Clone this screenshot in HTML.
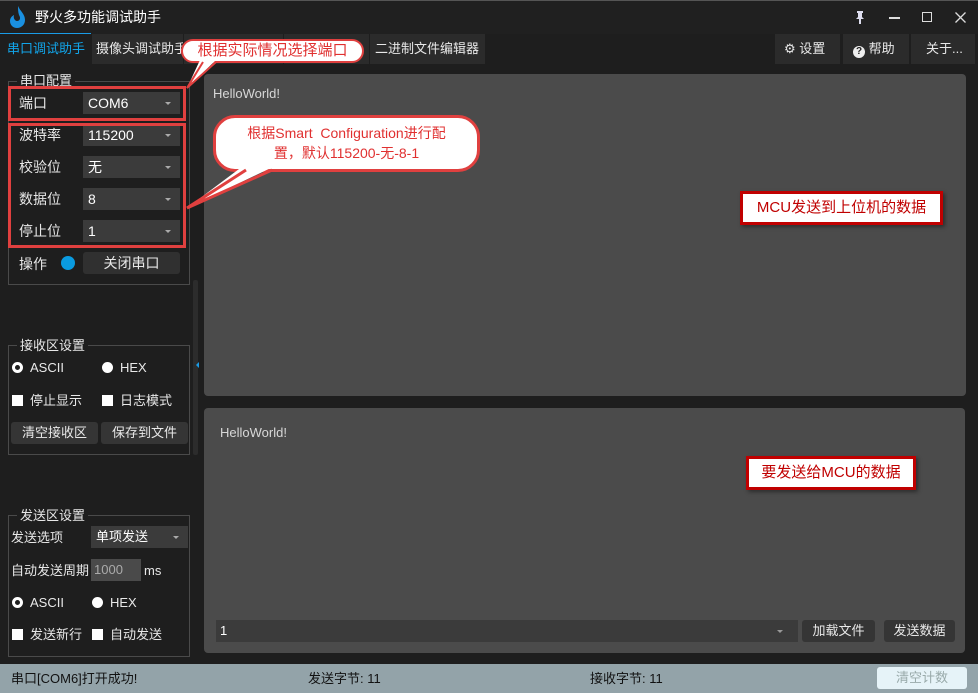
<!DOCTYPE html>
<html><head><meta charset="utf-8"><style>
*{margin:0;padding:0;box-sizing:border-box}
body{width:978px;height:693px;background:#1e1e1e;font-family:"Liberation Sans","Noto Sans CJK SC",sans-serif;font-size:13px;line-height:16px;color:#e8e8e8;position:relative;overflow:hidden}
.a{position:absolute;white-space:nowrap}
.cb{position:absolute;background:#3b3b3b;height:22px;padding-left:5px;line-height:22px;font-size:14px;color:#fff}
.cb:after{content:"";position:absolute;right:9px;top:10px;border:3.5px solid transparent;border-top:3.5px solid #aaa}
.btn{position:absolute;background:#353535;border-radius:3px;text-align:center;color:#e8e8e8}
.tab{position:absolute;top:34px;height:30px;line-height:30px;background:#2b2b2b;color:#e8e8e8;font-size:13px;padding-left:4px;white-space:nowrap;overflow:hidden}
.grp{position:absolute;border:1px solid #4a4a4a}
.gt{position:absolute;background:#1e1e1e;padding:0 3px;font-size:13px}
.rb{position:absolute;width:11px;height:11px;border-radius:50%;background:#fff}
.rb.o{background:#1e1e1e;border:3px solid #fff}
.ck{position:absolute;width:11px;height:11px;background:#fff}
.red{border:3px solid #e0403f}
</style></head><body>
<div class="a" style="left:0;top:0;width:978px;height:34px;background:#202020;border-top:1px solid #555"></div>
<svg class="a" style="left:9px;top:6px" width="18" height="22" viewBox="0 0 18 22"><path d="M9 0C11 5 16 8 16 14C16 19 12 22 8 22C4 22 1 19 1 15C1 12 3 10 5 9C4 12 6 15 8 15C11 15 12 12 10 9C9 6 9 3 9 0Z" fill="#1a90e0"/></svg>
<div class="a" style="left:35px;top:9px;font-size:14px;color:#fff">野火多功能调试助手</div>
<svg class="a" style="left:855px;top:11px" width="10" height="13"><path d="M2 0H8V2H7V6L9 8H6V13H4V8H1L3 6V2H2Z" fill="#dde"/></svg>
<div class="a" style="left:889px;top:17px;width:11px;height:1.5px;background:#ddd"></div>
<div class="a" style="left:922px;top:12px;width:10px;height:10px;border:1.5px solid #ddd"></div>
<svg class="a" style="left:955px;top:12px" width="11" height="11"><path d="M0.5 0.5L10.5 10.5M10.5 0.5L0.5 10.5" stroke="#ddd" stroke-width="1.3"/></svg>
<div class="a" style="left:0;top:33px;width:91px;height:2px;background:#1a9be6"></div>
<div class="tab" style="left:0;width:91px;background:#1e1e1e;color:#12a5ea;padding-left:7px">串口调试助手</div>
<div class="tab" style="left:92px;width:91px">摄像头调试助手</div>
<div class="tab" style="left:184px;width:99px"></div>
<div class="tab" style="left:284px;width:85px"></div>
<div class="tab" style="left:370px;width:115px;padding-left:5px">二进制文件编辑器</div>
<div class="tab" style="left:775px;width:65px;padding-left:9px">⚙ 设置</div>
<div class="tab" style="left:843px;width:66px;padding-left:10px"><span style="display:inline-block;width:12px;height:12px;border-radius:50%;background:#eee;color:#222;font-size:10px;line-height:12px;text-align:center;font-weight:bold;vertical-align:-1px">?</span> 帮助</div>
<div class="tab" style="left:911px;width:64px;padding-left:15px">关于...</div>
<div class="a" style="left:204px;top:74px;width:762px;height:322px;background:#4b4b4b;border-radius:4px"></div>
<div class="a" style="left:213px;top:86px;color:#d8d8d8;font-size:13px">HelloWorld!</div>
<div class="a" style="left:204px;top:408px;width:761px;height:245px;background:#4b4b4b;border-radius:4px"></div>
<div class="a" style="left:220px;top:425px;color:#d8d8d8;font-size:13px">HelloWorld!</div>
<div class="a" style="left:216px;top:620px;width:582px;height:22px;background:#3b3b3b;line-height:22px;padding-left:4px;color:#fff">1</div>
<div class="a" style="left:777px;top:630px;border:3px solid transparent;border-top:3px solid #999"></div>
<div class="btn" style="left:802px;top:620px;width:73px;height:22px;line-height:22px">加载文件</div>
<div class="btn" style="left:884px;top:620px;width:71px;height:22px;line-height:22px">发送数据</div>
<div class="a" style="left:193px;top:280px;width:5px;height:175px;background:#2c2c2c;border-radius:2px"></div>
<div class="a" style="left:193px;top:362px;border:3px solid transparent;border-right:3px solid #1a9be6"></div>
<div class="grp" style="left:8px;top:81px;width:182px;height:204px"></div>
<div class="gt" style="left:17px;top:73px">串口配置</div>
<div class="a" style="left:19px;top:95px;font-size:14px">端口</div>
<div class="cb" style="left:83px;top:92px;width:97px">COM6</div>
<div class="a" style="left:19px;top:127px;font-size:14px">波特率</div>
<div class="cb" style="left:83px;top:124px;width:97px">115200</div>
<div class="a" style="left:19px;top:159px;font-size:14px">校验位</div>
<div class="cb" style="left:83px;top:156px;width:97px">无</div>
<div class="a" style="left:19px;top:191px;font-size:14px">数据位</div>
<div class="cb" style="left:83px;top:188px;width:97px">8</div>
<div class="a" style="left:19px;top:223px;font-size:14px">停止位</div>
<div class="cb" style="left:83px;top:220px;width:97px">1</div>
<div class="a" style="left:19px;top:256px;font-size:14px">操作</div>
<div class="a" style="left:61px;top:256px;width:14px;height:14px;border-radius:50%;background:#0a9be0"></div>
<div class="btn" style="left:83px;top:252px;width:97px;height:22px;line-height:22px;font-size:14px;background:#303030">关闭串口</div>
<div class="grp" style="left:8px;top:345px;width:182px;height:110px"></div>
<div class="gt" style="left:17px;top:338px">接收区设置</div>
<div class="rb o" style="left:12px;top:362px"></div><div class="a" style="left:30px;top:360px">ASCII</div>
<div class="rb" style="left:102px;top:362px"></div><div class="a" style="left:120px;top:360px">HEX</div>
<div class="ck" style="left:12px;top:395px"></div><div class="a" style="left:30px;top:393px">停止显示</div>
<div class="ck" style="left:102px;top:395px"></div><div class="a" style="left:120px;top:393px">日志模式</div>
<div class="btn" style="left:11px;top:422px;width:87px;height:22px;line-height:22px">清空接收区</div>
<div class="btn" style="left:101px;top:422px;width:87px;height:22px;line-height:22px">保存到文件</div>
<div class="grp" style="left:8px;top:515px;width:182px;height:142px"></div>
<div class="gt" style="left:17px;top:508px">发送区设置</div>
<div class="a" style="left:11px;top:530px">发送选项</div>
<div class="cb" style="left:91px;top:526px;width:97px;font-size:13px">单项发送</div>
<div class="a" style="left:11px;top:563px">自动发送周期</div>
<div class="a" style="left:91px;top:559px;width:50px;height:22px;background:#4a4a4a;color:#aaa;line-height:22px;padding-left:3px">1000</div>
<div class="a" style="left:144px;top:563px">ms</div>
<div class="rb o" style="left:12px;top:597px"></div><div class="a" style="left:30px;top:595px">ASCII</div>
<div class="rb" style="left:92px;top:597px"></div><div class="a" style="left:110px;top:595px">HEX</div>
<div class="ck" style="left:12px;top:629px"></div><div class="a" style="left:30px;top:627px">发送新行</div>
<div class="ck" style="left:92px;top:629px"></div><div class="a" style="left:110px;top:627px">自动发送</div>
<div class="a" style="left:0;top:664px;width:978px;height:29px;background:#93a3a9;color:#111"></div>
<div class="a" style="left:11px;top:671px;color:#111">串口[COM6]打开成功!</div>
<div class="a" style="left:308px;top:671px;color:#111">发送字节: 11</div>
<div class="a" style="left:590px;top:671px;color:#111">接收字节: 11</div>
<div class="a" style="left:877px;top:667px;width:90px;height:22px;background:#e6f3f8;border-radius:3px;color:#9aa;text-align:center;line-height:22px">清空计数</div>
<div class="a red" style="left:8px;top:86px;width:178px;height:35px"></div>
<div class="a red" style="left:8px;top:123px;width:178px;height:125px"></div>
<div class="a" style="left:181px;top:39px;width:183px;height:24px;background:#fff;border:2px solid #e0403f;border-radius:12px;color:#e03030;font-size:15px;line-height:20px;text-align:center">根据实际情况选择端口</div>
<svg class="a" style="left:0;top:0" width="978" height="300">
<path d="M200 60L216 60L187 88Z" fill="#fff"/>
<path d="M203 62L187 88L216 62" fill="none" stroke="#e0403f" stroke-width="2"/>
</svg>
<div class="a" style="left:213px;top:115px;width:267px;height:57px;background:#fff;border:3px solid #e0403f;border-radius:22px;color:#e03030;font-size:14px;line-height:20px;text-align:center;padding-top:5px">根据Smart&nbsp; Configuration进行配<br>置，默认115200-无-8-1</div>
<svg class="a" style="left:0;top:0" width="978" height="300">
<path d="M243 166L275 166L187 208Z" fill="#fff"/>
<path d="M246 170L187 208L272 170" fill="none" stroke="#e0403f" stroke-width="3"/>
</svg>
<div class="a" style="left:740px;top:191px;width:203px;height:34px;background:#fff;border:3px solid #c00000;color:#c00000;font-size:15px;line-height:28px;text-align:center;box-shadow:2px 2px 4px rgba(0,0,0,.4)">MCU发送到上位机的数据</div>
<div class="a" style="left:746px;top:456px;width:170px;height:34px;background:#fff;border:3px solid #c00000;color:#c00000;font-size:15px;line-height:28px;text-align:center;box-shadow:2px 2px 4px rgba(0,0,0,.4)">要发送给MCU的数据</div>
</body></html>
